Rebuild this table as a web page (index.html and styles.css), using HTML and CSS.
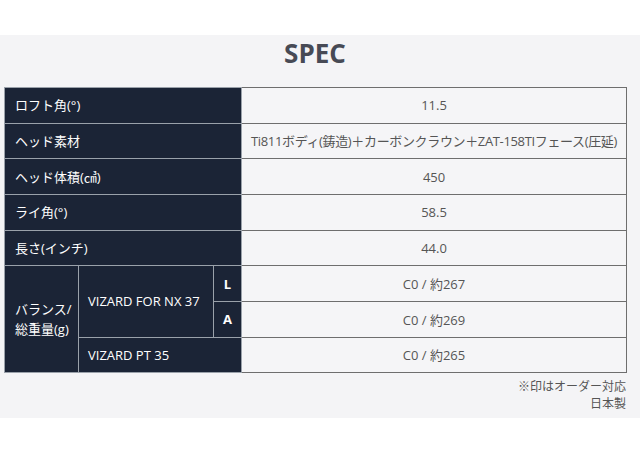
FILE: index.html
```html
<!DOCTYPE html>
<html lang="ja">
<head>
<meta charset="utf-8">
<title>SPEC</title>
<link rel="stylesheet" href="styles.css">
</head>
<body>
<div class="top-space"></div>
<section class="spec">
  <h2 class="spec-title">SPEC</h2>
  <table class="spec-table">
    <colgroup>
      <col class="c1"><col class="c2"><col class="c3"><col class="c4">
    </colgroup>
    <tbody>
      <tr><th colspan="3">ロフト角(°)</th><td>11.5</td></tr>
      <tr><th colspan="3">ヘッド素材</th><td class="long">Ti811ボディ(鋳造)＋カーボンクラウン＋ZAT-158TIフェース(圧延)</td></tr>
      <tr><th colspan="3">ヘッド体積(㎤)</th><td>450</td></tr>
      <tr><th colspan="3">ライ角(°)</th><td>58.5</td></tr>
      <tr><th colspan="3">長さ(インチ)</th><td>44.0</td></tr>
      <tr>
        <th rowspan="3" class="multi">バランス/<br>総重量(g)</th>
        <th rowspan="2" class="sub">VIZARD FOR NX 37</th>
        <th class="flex">L</th>
        <td>C0 / 約267</td>
      </tr>
      <tr><th class="flex">A</th><td>C0 / 約269</td></tr>
      <tr><th colspan="2" class="sub">VIZARD PT 35</th><td>C0 / 約265</td></tr>
    </tbody>
  </table>
  <div class="notes">
    <p>※印はオーダー対応</p>
    <p>日本製</p>
  </div>
</section>
</body>
</html>
```
FILE: styles.css
```css
html, body {
  margin: 0;
  padding: 0;
  background: #ffffff;
  font-family: "Open Sans", "Noto Sans CJK JP", sans-serif;
}
.top-space {
  height: 35px;
}
.spec {
  background: #f4f4f6;
  padding: 0 14px 6px 4px;
}
.spec-title {
  margin: 0;
  height: 36px;
  line-height: 36px;
  font-size: 26px;
  font-weight: 700;
  color: #474a55;
  text-align: center;
}
.spec-table {
  margin-top: 16px;
  width: 622px;
  border-collapse: collapse;
  table-layout: fixed;
  font-size: 13px;
}
.c1 { width: 74px; }
.c2 { width: 135px; }
.c3 { width: 28px; }
.c4 { width: 385px; }
.spec-table tr {
  height: 35.67px;
}
.spec-table th {
  background: #1b2436;
  color: #ffffff;
  font-weight: 400;
  text-align: left;
  padding: 0 0 0 10px;
  border: 1px solid #9aa1aa;
  white-space: nowrap;
  line-height: 18px;
}
.spec-table th.multi {
  line-height: 20px;
}
.spec-table th.sub {
  padding-left: 9px;
}
.spec-table th.flex {
  text-align: center;
  padding: 0;
  font-weight: 700;
}
.spec-table td {
  background: #f5f5f7;
  color: #555555;
  text-align: center;
  padding: 0;
  border: 1px solid #6e6e6e;
  white-space: nowrap;
  overflow: hidden;
}
.spec-table td.long {
  letter-spacing: -0.35px;
}
.notes {
  margin-top: 5px;
  text-align: right;
  font-size: 12px;
  line-height: 17px;
  color: #555555;
}
.notes p {
  margin: 0;
}
```
